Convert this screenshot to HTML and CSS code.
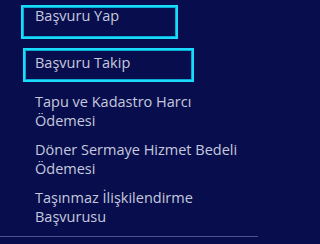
FILE: index.html
```html
<!DOCTYPE html>
<html lang="tr">
<head>
<meta charset="utf-8">
<link rel="stylesheet" href="styles.css">
</head>
<body>
<nav class="menu">
  <ul class="list">
    <li class="item item-boxed item-first"><a href="#">Başvuru Yap</a></li>
    <li class="item item-boxed item-second"><a href="#">Başvuru Takip</a></li>
    <li class="item"><a href="#">Tapu ve Kadastro Harcı Ödemesi</a></li>
    <li class="item"><a href="#">Döner Sermaye Hizmet Bedeli Ödemesi</a></li>
    <li class="item"><a href="#">Taşınmaz İlişkilendirme Başvurusu</a></li>
  </ul>
  <div class="divider"></div>
</nav>
</body>
</html>
```
FILE: styles.css
```css
html, body {
  margin: 0;
  padding: 0;
  background: #080e4d;
}
body {
  width: 258px;
  height: 244px;
  overflow: hidden;
  font-family: "Open Sans", "Noto Sans", sans-serif;
  font-size: 14.5px;
  line-height: 19px;
  color: #c6c9dd;
}
.menu {
  padding-top: 5px;
}
.list {
  list-style: none;
  margin: 0;
  padding: 0;
  display: flex;
  flex-direction: column;
}
.item a {
  color: inherit;
  text-decoration: none;
  display: block;
}
.item {
  padding: 0 10px 0 35px;
  margin-bottom: 10px;
}
.item-boxed {
  border: 2px solid #19dcfa;
  box-shadow: inset 0 0 0 1px #0aa9d2;
  box-sizing: border-box;
  height: 34px;
}
.item-first {
  margin-left: 21px;
  width: 157px;
  padding: 0 0 0 12px;
  margin-bottom: 9px;
}
.item-first a {
  line-height: 17px;
}
.item-second {
  margin-left: 23px;
  width: 171px;
  padding: 3px 0 0 10px;
  margin-bottom: 10px;
}
.divider {
  height: 1px;
  background: #4d5190;
  margin-top: 0;
}
```
